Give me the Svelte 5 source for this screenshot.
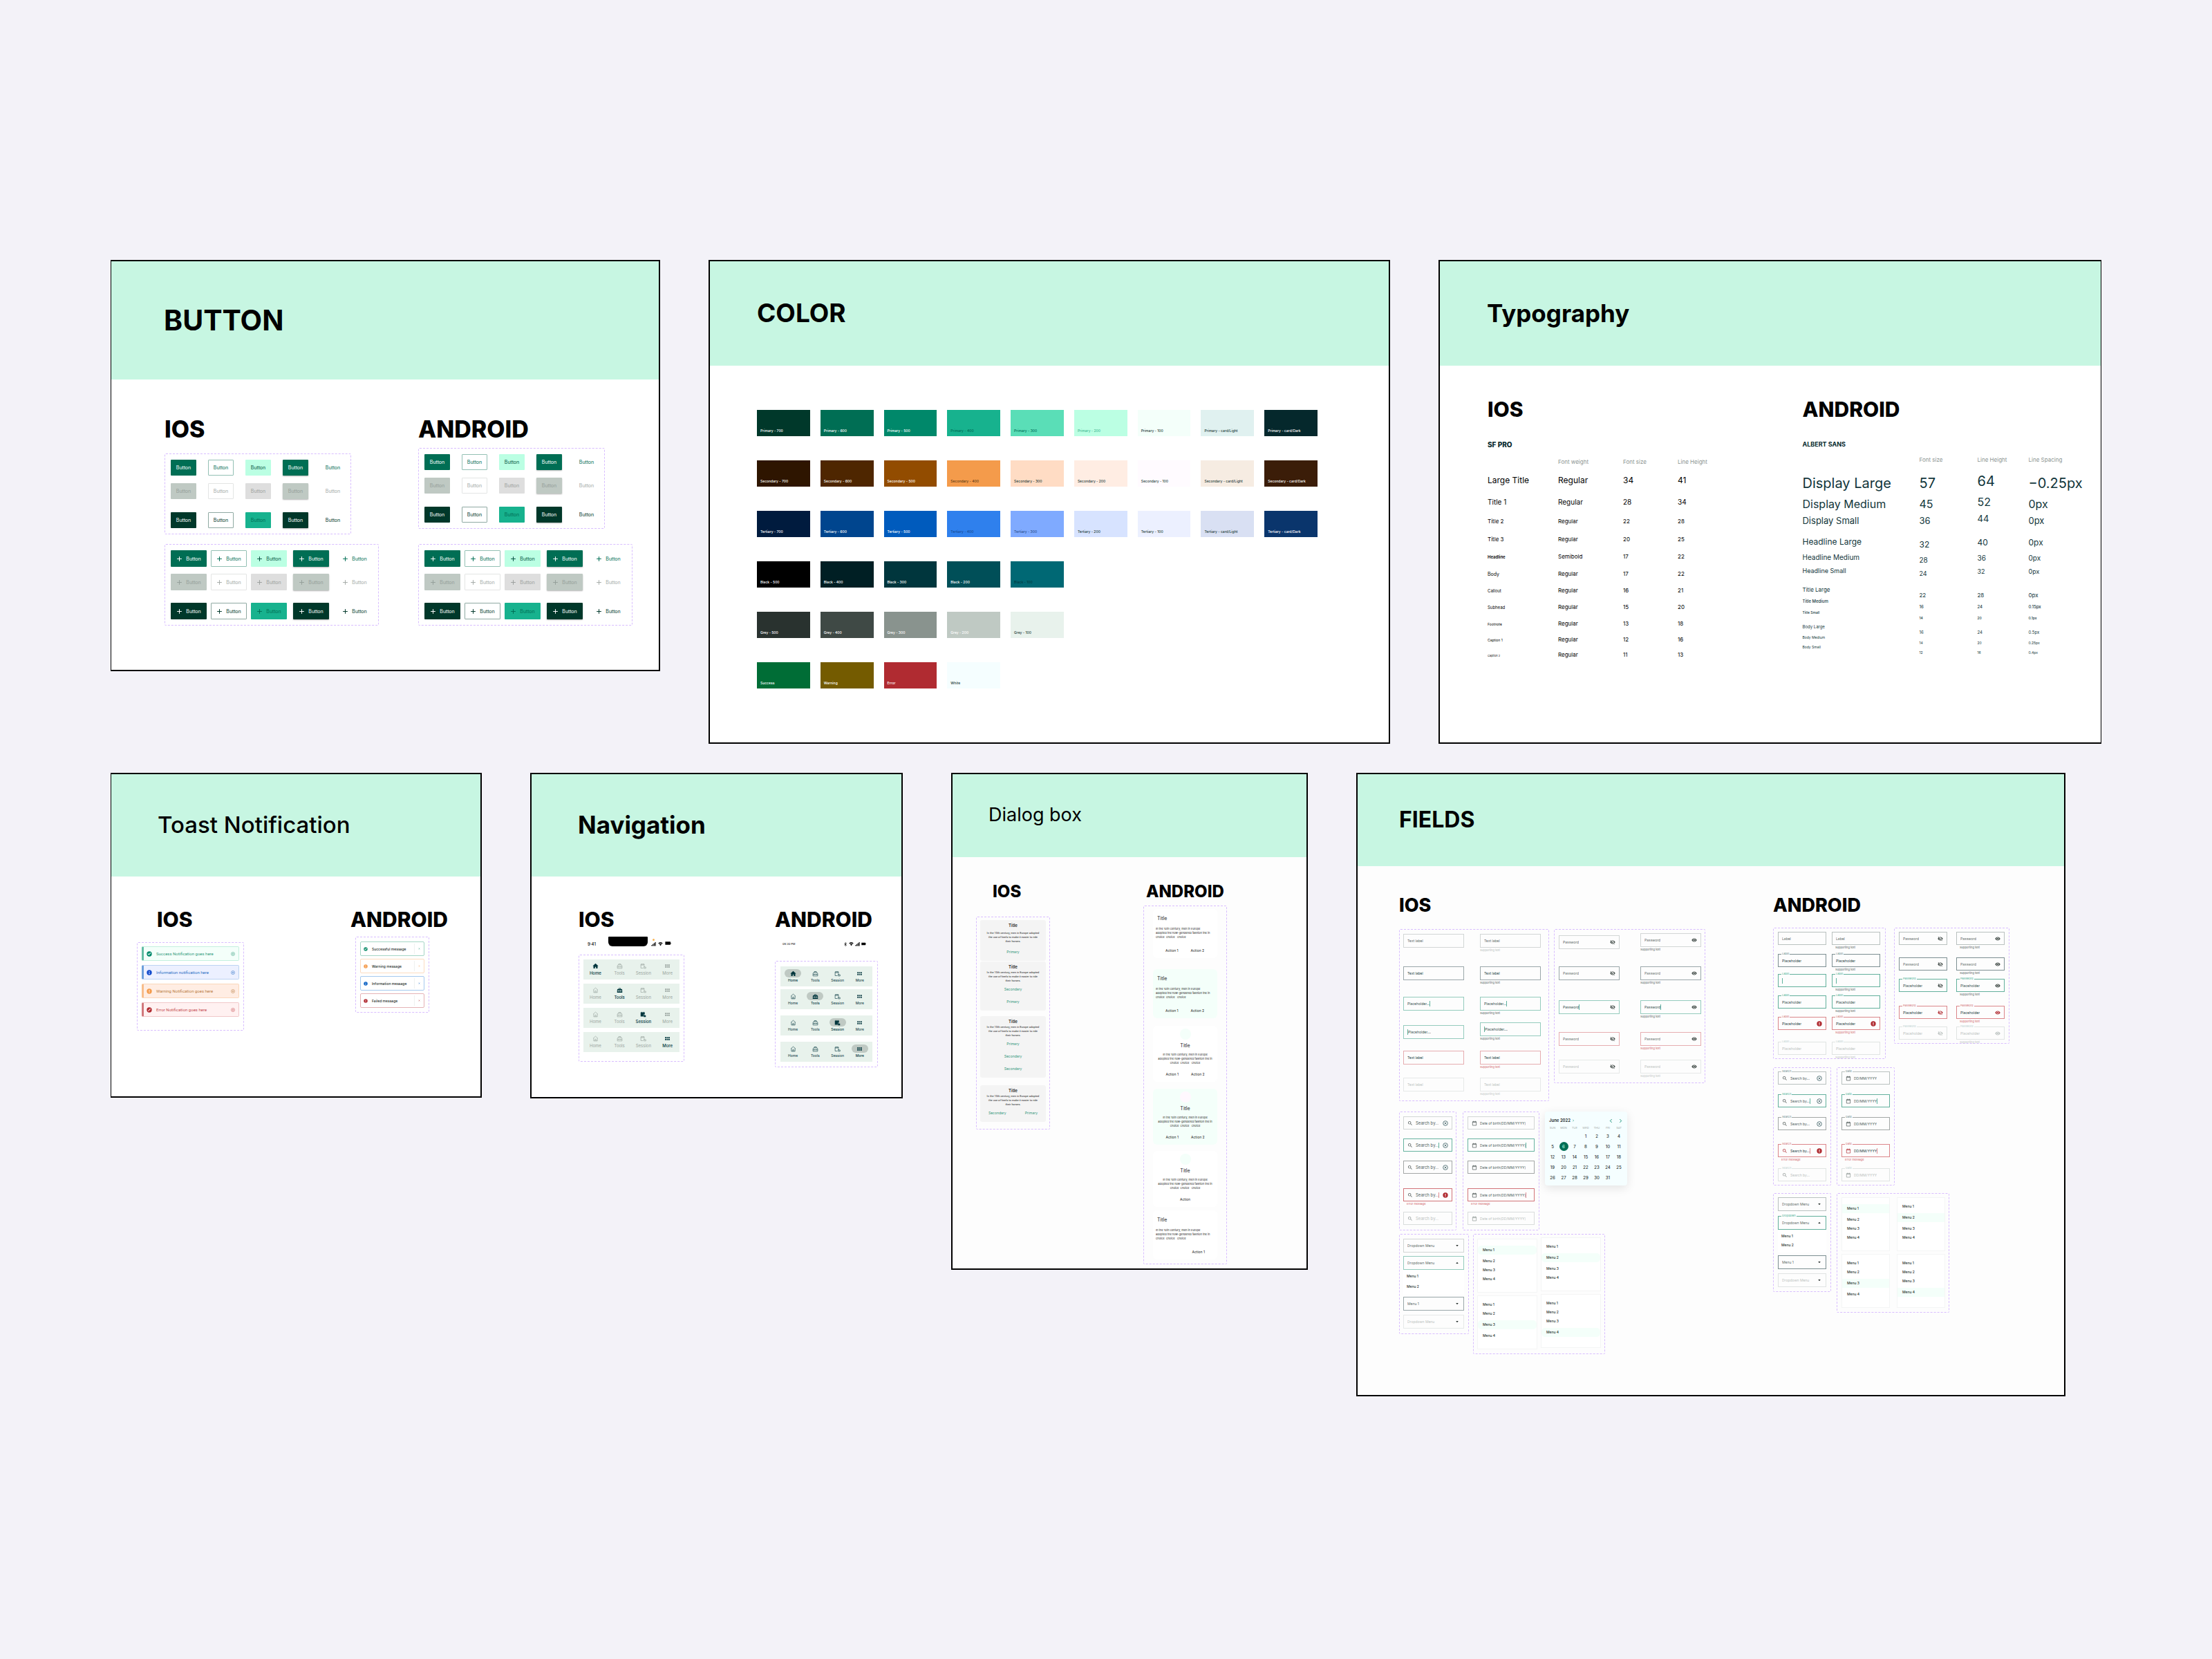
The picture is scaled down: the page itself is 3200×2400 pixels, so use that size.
<script>
  const icons = {
    plus: { d: 'M12 3v18M3 12h18', stroke: 2.6 },
    home: { d: 'M10 21v-6h4v6h6v-9h3L12 2 1 12h3v9z' },
    homeLine: { d: 'M3 11 12 3l9 8M5 10v11h14V10M10 21v-5a2 2 0 0 1 4 0v5', stroke: 1.8 },
    tools: { d: 'M8 7V4h8v3h4l2 4v3h-5v-2h-3v2h-4v-2H7v2H2v-3l2-4zM10 5.600V7h4V5.600zM2 15.500h5v2h3v-2h4v2h3v-2h5V21H2z' },
    toolsLine: { d: 'M8 8V4h8v4M5 8h14l2 4v9H3v-9zM3 15h18M8 13v4M16 13v4', stroke: 1.8 },
    session: { d: 'M2 4h3V2h2v2h6V2h2v2h3v7h-5v9H2zM14 12h3v3h5v7h-8z' },
    sessionLine: { d: 'M12 20H3V5h13v5M3 8h13M7 3v3M13 3v3M15 13h2v3h5v5h-7z', stroke: 1.8 },
    more: { d: 'M3 6h5v5H3zM9.500 6h5v5h-5zM16 6h5v5h-5zM3 13h5v5H3zM9.500 13h5v5h-5zM16 13h5v5h-5z' },
    eye: { d: 'M12 4.500C7 4.500 2.730 7.610 1 12c1.730 4.390 6 7.500 11 7.500s9.270-3.110 11-7.500c-1.730-4.390-6-7.500-11-7.500zM12 17c-2.760 0-5-2.240-5-5s2.240-5 5-5 5 2.240 5 5-2.240 5-5 5zm0-8c-1.660 0-3 1.340-3 3s1.340 3 3 3 3-1.340 3-3-1.340-3-3-3z' },
    eyeOff: { d: 'M12 7c2.760 0 5 2.240 5 5 0 .65-.13 1.260-.36 1.830l2.920 2.920c1.510-1.260 2.700-2.890 3.430-4.750-1.730-4.390-6-7.500-11-7.500-1.400 0-2.740.25-3.980.7l2.160 2.160C10.740 7.130 11.350 7 12 7zM2 4.270l2.280 2.280.46.46C3.080 8.300 1.780 10.020 1 12c1.730 4.390 6 7.500 11 7.500 1.550 0 3.030-.3 4.380-.84l.42.42L19.730 22 21 20.730 3.270 3 2 4.270zM7.530 9.800l1.550 1.550c-.05.21-.08.43-.08.65 0 1.660 1.340 3 3 3 .22 0 .44-.03.65-.08l1.550 1.550c-.67.33-1.410.53-2.200.53-2.760 0-5-2.240-5-5 0-.79.2-1.530.53-2.200z' },
    search: { d: 'M15.500 14h-.79l-.28-.27C15.410 12.590 16 11.110 16 9.500 16 5.910 13.090 3 9.500 3S3 5.910 3 9.500 5.910 16 9.500 16c1.610 0 3.090-.59 4.230-1.570l.27.28v.79l5 4.990L20.490 19l-4.990-5zm-6 0C7.010 14 5 11.990 5 9.500S7.010 5 9.500 5 14 7.010 14 9.500 11.990 14 9.500 14z' },
    clear: { d: 'M12 2a10 10 0 1 0 0 20 10 10 0 0 0 0-20zM8 8l8 8M16 8l-8 8', stroke: 2.2 },
    date: { d: 'M4 5h16v16H4zM4 8h16M8 2v4M16 2v4', stroke: 2 },
    alert: { d: 'M12 1a11 11 0 1 0 0 22 11 11 0 0 0 0-22zm-1.500 5h3v8h-3zm0 10h3v3h-3z' },
    check: { d: 'M12 1a11 11 0 1 0 0 22 11 11 0 0 0 0-22zm-2 16-5-5 2-2 3 3 7-7 2 2z' },
    info: { d: 'M12 1a11 11 0 1 0 0 22 11 11 0 0 0 0-22zm-1.500 5h3v3h-3zm0 5h3v8h-3z' },
    ban: { d: 'M12 1a11 11 0 1 0 0 22 11 11 0 0 0 0-22zM6 16l10-10 2 2L8 18z' },
    cross: { d: 'M5 5l14 14M19 5 5 19', stroke: 3.4 },
    down: { d: 'M5 8h14l-7 9z' },
    up: { d: 'M5 16h14l-7-9z' },
    next: { d: 'M8 4l8 8-8 8', stroke: 3.2 },
    prev: { d: 'M16 4l-8 8 8 8', stroke: 3.2 },
    signal: { d: 'M1 17h4v5H1zM7 13h4v9H7zM13 8h4v14h-4zM19 3h4v19h-4z' },
    wifi: { d: 'M1 9C7 3 17 3 23 9l-3 3c-4-4-12-4-16 0zM6 14c3-3 9-3 12 0l-6 7z' },
    battery: { d: 'M1 6h20v12H1zM22 10h2v4h-2z' },
    bluetooth: { d: 'M6 7l12 10-6 5V2l6 5L6 17', stroke: 2.6 }
  };

  const buttonKinds = ['filled', 'outlined', 'tonal', 'elevated', 'text'];
  const buttonStates = ['enabled', 'disabled', 'pressed'];

  const scale = (name, colors, dark) => [
    ...[700, 600, 500, 400, 300, 200, 100].map((step, i) => ({ label: `${name} - ${step}`, bg: colors[i], fg: dark[i] })),
    { label: `${name} - card/Light`, bg: colors[7], fg: '#1d3b38' },
    { label: `${name} - card/Dark`, bg: colors[8], fg: '#ffffff' }
  ];
  const W = '#ffffff';
  const D = '#1d3b38';
  const palette = [
    scale('Primary', ['#00382a', '#006e54', '#00886a', '#17b28e', '#5adeb7', '#bbffe3', '#f4fffa', '#e0f1f0', '#05282c'], [W, W, W, '#006a52', '#007057', '#45b893', D]),
    scale('Secondary', ['#2e1500', '#4e2600', '#924c00', '#f49b4b', '#ffdcc4', '#ffede3', '#fffbff', '#f6ece2', '#3b1d08'], [W, W, W, '#5c3a14', D, D, D]),
    scale('Tertiary', ['#001b3e', '#00458e', '#005bbd', '#2f80ed', '#7faaff', '#d7e3ff', '#ecf0ff', '#d9e0f3', '#0a356c'], [W, W, W, '#174a94', '#2b4f8d', D, D]),
    [['Black - 500', '#000000', W], ['Black - 400', '#001f24', W], ['Black - 300', '#00363d', W], ['Black - 200', '#004f58', W], ['Black - 100', '#006874', '#003a41']],
    [['Grey - 500', '#29322f', W], ['Grey - 400', '#3f4945', W], ['Grey - 300', '#89938e', W], ['Grey - 200', '#bfc9c3', W], ['Grey - 100', '#e8f2ec', D]],
    [['Success', '#006d36', W], ['Warning', '#745b00', W], ['Error', '#b02b31', W], ['White', '#f5feff', D]]
  ].map((row) => row.map((s) => (Array.isArray(s) ? { label: s[0], bg: s[1], fg: s[2] } : s)));

  // name, weight, size, line height, row height, label size, value size
  const iosType = [
    ['Large Title', 'Regular', 34, 41, 31, 12, 12],
    ['Title 1', 'Regular', 28, 34, 28, 10, 10],
    ['Title 2', 'Regular', 22, 28, 26, 8, 8],
    ['Title 3', 'Regular', 20, 25, 25, 8, 8],
    ['Headline', 'Semibold', 17, 22, 25, 6, 8],
    ['Body', 'Regular', 17, 22, 24, 7, 8],
    ['Callout', 'Regular', 16, 21, 24, 6, 8],
    ['Subhead', 'Regular', 15, 20, 24, 6, 8],
    ['Footnote', 'Regular', 13, 18, 23, 5, 8],
    ['Caption 1', 'Regular', 12, 16, 22, 5, 8],
    ['Caption 2', 'Regular', 11, 13, 16, 4, 8]
  ];
  // name, size, line height, spacing, row height, text size, group
  const androidType = [
    ['Display Large', 57, 64, '−0.25px', 30, 20, 'display'],
    ['Display Medium', 45, 52, '0px', 24, 16, 'display'],
    ['Display Small', 36, 44, '0px', 34, 13, 'display'],
    ['Headline Large', 32, 40, '0px', 22, 12, 'headline'],
    ['Headline Medium', 28, 36, '0px', 20, 10, 'headline'],
    ['Headline Small', 24, 32, '0px', 27, 9, 'headline'],
    ['Title Large', 22, 28, '0px', 17, 8, 'small'],
    ['Title Medium', 16, 24, '0.15px', 16, 6, 'small medium'],
    ['Title Small', 14, 20, '0.1px', 21, 5, 'small medium'],
    ['Body Large', 16, 24, '0.5px', 15, 6, 'small'],
    ['Body Medium', 14, 20, '0.25px', 14, 5, 'small'],
    ['Body Small', 12, 16, '0.4px', 14, 5, 'small']
  ];

  const iosToasts = [
    ['success', 'check', 'Success Notification goes here'],
    ['info', 'info', 'Information notification here'],
    ['warning', 'alert', 'Warning Notification goes here'],
    ['error', 'ban', 'Error Notification goes here']
  ];
  const androidToasts = [
    ['success', 'check', 'Successful message'],
    ['warning', 'alert', 'Warning message'],
    ['info', 'info', 'Information message'],
    ['error', 'alert', 'Failed message']
  ];

  const tabs = [['home', 'Home'], ['tools', 'Tools'], ['session', 'Session'], ['more', 'More']];

  const iosDialogText = ['In the 10th century, men in Europe adopted', 'the use of heels to make it easier to ride', 'their horses.'];
  const androidDialogText = ['In the 10th century, men in Europe', 'adopted the now-gendered fashion the in', 'choice  choice   choice'];
  const iosDialogs = [
    { actions: ['Primary'], roomy: true },
    { actions: ['Secondary', 'Primary'] },
    { actions: ['Primary', 'Secondary', 'Secondary'] },
    { actions: ['Secondary', 'Primary'], row: true }
  ];
  const androidDialogs = [
    { actions: ['Action 1', 'Action 2'] },
    { actions: ['Action 1', 'Action 2'], tint: true },
    { actions: ['Action 1', 'Action 2'], hero: true },
    { actions: ['Action 1', 'Action 2'], hero: true, tint: true },
    { actions: ['Action'], hero: true },
    { actions: ['Action 1'], end: true }
  ];

  const iosText = [
    { value: 'Text label', state: 'idle' },
    { value: 'Text label', state: 'strong' },
    { value: 'Placeholder...', state: 'focus', caret: 'end' },
    { value: 'Placeholder....', state: 'focus', caret: 'start' },
    { value: 'Text label', state: 'error' },
    { value: 'Text label', state: 'off' }
  ];
  const iosPassword = ['idle', 'strong', 'focus', 'error', 'off'].map((state) => ({
    value: 'Password', state, caret: state === 'focus' ? 'end' : ''
  }));
  const androidText = [
    { value: 'Label', state: 'idle' },
    { value: 'Placeholder', state: 'strong', label: 'Label' },
    { value: '', state: 'focus', label: 'Label', caret: 'start' },
    { value: 'Placeholder', state: 'focus', label: 'Label' },
    { value: 'Placeholder', state: 'error', label: 'Label', trail: 'alert' },
    { value: 'Placeholder', state: 'off', label: 'Label' }
  ];
  const androidPassword = [
    { value: 'Password', state: 'idle' },
    { value: 'Password', state: 'strong' },
    { value: 'Placeholder', state: 'focus', label: 'Password' },
    { value: 'Placeholder', state: 'error', label: 'Password' },
    { value: 'Placeholder', state: 'off', label: 'Password' }
  ];
  const pickerStates = ['idle', 'focus', 'dark', 'error', 'off'];
  const pickers = (value, lead, trail, label) =>
    pickerStates.map((state) => ({
      value, state, lead, label,
      trail: !trail || state === 'off' ? '' : state === 'error' ? 'alert' : trail,
      caret: state === 'focus' || state === 'error' ? 'end' : '',
      support: state === 'error' ? 'Error message' : ''
    }));

  const weekdays = ['SUN', 'MON', 'TUE', 'WED', 'THU', 'FRI', 'SAT'];
  const weeks = Array.from({ length: 5 }, (_, w) =>
    Array.from({ length: 7 }, (_, d) => w * 7 + d - 2).map((n) => (n > 0 && n < 32 ? n : null))
  );
  const menu = ['Menu 1', 'Menu 2', 'Menu 3', 'Menu 4'];
</script>

{#snippet icon(name, cls = '')}
  <svg class="icon {cls}" viewBox="0 0 24 24" aria-hidden="true">
    {#if icons[name].stroke}
      <path d={icons[name].d} fill="none" stroke="currentColor" stroke-width={icons[name].stroke} />
    {:else}
      <path d={icons[name].d} fill="currentColor" fill-rule="evenodd" />
    {/if}
  </svg>
{/snippet}

{#snippet buttonSet(withIcon)}
  <div class="set buttons" class:wide={withIcon}>
    {#each buttonStates as state}
      {#each buttonKinds as kind}
        <button class="btn {kind} {state}" disabled={state === 'disabled'}>
          {#if withIcon}{@render icon('plus', 'i9')}{/if}
          <span>Button</span>
        </button>
      {/each}
    {/each}
  </div>
{/snippet}

{#snippet tabBars(kind)}
  <div class="set bars {kind}">
    {#each tabs as current}
      <nav class="bar">
        {#each tabs as tab}
          <button class="tab" class:active={tab === current}>
            <span class="tab-icon">
              {@render icon(tab === current || tab[0] === 'more' ? tab[0] : tab[0] + 'Line', 'i9')}
            </span>
            <span>{tab[1]}</span>
          </button>
        {/each}
      </nav>
    {/each}
  </div>
{/snippet}

{#snippet field(f, extra = {})}
  {@const o = { ...f, ...extra }}
  <div class="cell">
    <label class="field {o.state}">
      {#if o.label}<span class="floating">{o.label}</span>{/if}
      {#if o.lead}{@render icon(o.lead, 'lead')}{/if}
      {#if o.caret === 'start'}<i class="caret"></i>{/if}
      <input type="text" value={o.value} size="1" disabled={o.state === 'off'} aria-label={o.label || o.value} />
      {#if o.caret === 'end'}<i class="caret"></i>{/if}
      {#if o.trail}{@render icon(o.trail, 'trail ' + o.trail)}{/if}
    </label>
    {#if o.support}<small class={o.state}>{o.support}</small>{/if}
  </div>
{/snippet}

{#snippet dropdown(value, state, arrow, label)}
  <label class="field {state}">
    {#if label}<span class="floating">{label}</span>{/if}
    <select disabled={state === 'off'} aria-label={label || value}><option>{value}</option></select>
    {@render icon(arrow, 'i6 arrow')}
  </label>
{/snippet}

{#snippet dropdowns(label)}
  <div class="set drops">
    {@render dropdown('Dropdown Menu', 'idle', 'down')}
    <div>
      {@render dropdown('Dropdown Menu', 'focus', 'up', label)}
      <ul class="options"><li>Menu 1</li><li>Menu 2</li></ul>
    </div>
    {@render dropdown('Menu 1', 'strong', 'down')}
    {@render dropdown('Dropdown Menu', 'off', 'down')}
  </div>
{/snippet}

{#snippet menuCard(active)}
  <ul class="menu">
    {#each menu as item, i}<li class:active={i === active}>{item}</li>{/each}
  </ul>
{/snippet}

{#snippet menus()}
  <div class="set menus">
    <div class="menu-col">{@render menuCard(0)}{@render menuCard(2)}</div>
    <div class="menu-col">{@render menuCard(1)}{@render menuCard(3)}</div>
  </div>
{/snippet}

<main>
  <div class="row top-row">
    <section class="panel p-button">
      <header><h2>BUTTON</h2></header>
      <div class="body">
        <div class="platform ios">
          <h3>IOS</h3>
          {@render buttonSet(false)}
          {@render buttonSet(true)}
        </div>
        <div class="platform android">
          <h3>ANDROID</h3>
          {@render buttonSet(false)}
          {@render buttonSet(true)}
        </div>
      </div>
    </section>

    <section class="panel p-color">
      <header><h2>COLOR</h2></header>
      <div class="body palette">
        {#each palette as row}
          <ul class="swatches">
            {#each row as s}
              <li style:background={s.bg} style:color={s.fg}>{s.label}</li>
            {/each}
          </ul>
        {/each}
      </div>
    </section>

    <section class="panel p-type">
      <header><h2>Typography</h2></header>
      <div class="body">
        <div class="platform ios">
          <h3>IOS</h3>
          <h4>SF PRO</h4>
          <table>
            <thead><tr><th></th><th>Font weight</th><th>Font size</th><th>Line Height</th></tr></thead>
            <tbody>
              {#each iosType as [name, weight, size, line, height, labelSize, valueSize]}
                <tr style:height="{height}px" style:font-size="{valueSize}px">
                  <td class:strong={weight === 'Semibold'} style:font-size="{labelSize}px">{name}</td>
                  <td>{weight}</td><td>{size}</td><td>{line}</td>
                </tr>
              {/each}
            </tbody>
          </table>
        </div>
        <div class="platform android">
          <h3>ANDROID</h3>
          <h4>ALBERT SANS</h4>
          <table>
            <thead><tr><th></th><th>Font size</th><th>Line Height</th><th>Line Spacing</th></tr></thead>
            <tbody>
              {#each androidType as [name, size, line, spacing, height, textSize, group]}
                <tr class={group} style:height="{height}px" style:font-size="{textSize}px">
                  <td>{name}</td><td>{size}</td><td>{line}</td><td>{spacing}</td>
                </tr>
              {/each}
            </tbody>
          </table>
        </div>
      </div>
    </section>
  </div>

  <div class="row bottom-row">
    <section class="panel p-toast">
      <header><h2>Toast Notification</h2></header>
      <div class="body">
        <div class="platform ios">
          <h3>IOS</h3>
          <div class="set toasts">
            {#each iosToasts as [tone, mark, text]}
              <div class="toast {tone}" role="status">
                {@render icon(mark, 'i8')}
                <span>{text}</span>
                <button aria-label="Dismiss">{@render icon('clear', 'i6')}</button>
              </div>
            {/each}
          </div>
        </div>
        <div class="platform android">
          <h3>ANDROID</h3>
          <div class="set toasts">
            {#each androidToasts as [tone, mark, text]}
              <div class="toast {tone}" role="status">
                {@render icon(mark, 'i6')}
                <span>{text}</span>
                <button aria-label="Dismiss">{@render icon('cross', 'i3')}</button>
              </div>
            {/each}
          </div>
        </div>
      </div>
    </section>

    <section class="panel p-nav">
      <header><h2>Navigation</h2></header>
      <div class="body">
        <div class="platform ios">
          <h3>IOS</h3>
          <div class="status">
            <time>9:41</time>
            <div class="notch"></div>
            <div class="status-icons">
              <i class="dot"></i>
              {@render icon('signal', 'i7')}{@render icon('wifi', 'i7')}{@render icon('battery', 'i9')}
            </div>
          </div>
          {@render tabBars('ios-bars')}
        </div>
        <div class="platform android">
          <h3>ANDROID</h3>
          <div class="status">
            <time>09:30 PM</time>
            <div class="status-icons">
              {@render icon('bluetooth', 'i6')}{@render icon('wifi', 'i7')}{@render icon('signal', 'i7')}{@render icon('battery', 'i7')}
            </div>
          </div>
          {@render tabBars('android-bars')}
        </div>
      </div>
    </section>

    <section class="panel p-dialog">
      <header><h2>Dialog box</h2></header>
      <div class="body">
        <div class="platform ios">
          <h3>IOS</h3>
          <div class="set dialogs">
            {#each iosDialogs as d}
              <article class="dialog" class:roomy={d.roomy}>
                <h5>Title</h5>
                <p>{#each iosDialogText as line}<span>{line}</span>{/each}</p>
                <div class="actions" class:side={d.row}>
                  {#each d.actions as a}<button>{a}</button>{/each}
                </div>
              </article>
            {/each}
          </div>
        </div>
        <div class="platform android">
          <h3>ANDROID</h3>
          <div class="set dialogs">
            {#each androidDialogs as d}
              <article class="dialog" class:tint={d.tint} class:hero={d.hero} class:end={d.end}>
                {#if d.hero}<i class="disc"></i>{/if}
                <h5>Title</h5>
                <p>{#each androidDialogText as line}<span>{line}</span>{/each}</p>
                <div class="actions">{#each d.actions as a}<button>{a}</button>{/each}</div>
              </article>
            {/each}
          </div>
        </div>
      </div>
    </section>

    <section class="panel p-fields">
      <header><h2>FIELDS</h2></header>
      <div class="body">
        <div class="platform ios">
          <h3>IOS</h3>
          <div class="group">
            <div class="set text-set">
              <div class="col a">{#each iosText as f}{@render field(f)}{/each}</div>
              <div class="col b">{#each iosText as f}{@render field(f, { support: 'Supporting text' })}{/each}</div>
            </div>
            <div class="set pass-set">
              <div class="col a">{#each iosPassword as f}{@render field(f, { trail: 'eyeOff' })}{/each}</div>
              <div class="col b">{#each iosPassword as f}{@render field(f, { trail: 'eye', support: 'Supporting text' })}{/each}</div>
            </div>
          </div>
          <div class="group">
            <div class="set pick-set">
              {#each pickers('Search by...', 'search', 'clear') as f}{@render field(f)}{/each}
            </div>
            <div class="set pick-set date">
              {#each pickers('Date of birth(DD/MM/YYYY)', 'date', '') as f}{@render field(f)}{/each}
            </div>
            <div class="calendar">
              <div class="month">
                <strong>June 2022</strong>
                <button class="open" aria-label="Choose month">{@render icon('next', 'i4')}</button>
                <button aria-label="Previous month">{@render icon('prev', 'i7')}</button>
                <button aria-label="Next month">{@render icon('next', 'i7')}</button>
              </div>
              <table>
                <thead><tr>{#each weekdays as day}<th>{day}</th>{/each}</tr></thead>
                <tbody>
                  {#each weeks as week}
                    <tr>
                      {#each week as day}
                        <td>{#if day}<button class:selected={day === 6}>{day}</button>{/if}</td>
                      {/each}
                    </tr>
                  {/each}
                </tbody>
              </table>
            </div>
          </div>
          <div class="group">
            {@render dropdowns('')}
            {@render menus()}
          </div>
        </div>

        <div class="platform android">
          <h3>ANDROID</h3>
          <div class="group">
            <div class="set text-set">
              <div class="col">{#each androidText as f}{@render field(f)}{/each}</div>
              <div class="col">{#each androidText as f}{@render field(f, { support: 'Supporting text' })}{/each}</div>
            </div>
            <div class="set pass-set">
              <div class="col">{#each androidPassword as f}{@render field(f, { trail: 'eyeOff' })}{/each}</div>
              <div class="col">{#each androidPassword as f}{@render field(f, { trail: 'eye', support: 'Supporting text' })}{/each}</div>
            </div>
          </div>
          <div class="group">
            <div class="set pick-set">
              {#each pickers('Search by...', 'search', 'clear', 'Search') as f}{@render field(f)}{/each}
            </div>
            <div class="set pick-set">
              {#each pickers('DD/MM/YYYY', 'date', '', 'Date') as f}{@render field(f)}{/each}
            </div>
          </div>
          <div class="group">
            {@render dropdowns('Dropdown')}
            {@render menus()}
          </div>
        </div>
      </div>
    </section>
  </div>
</main>

<style>
  :global(body) {
    background: #f3f2f8;
  }
  main,
  main * {
    box-sizing: border-box;
  }
  main {
    min-height: 100vh;
    padding: 376px 160px;
    display: flex;
    flex-direction: column;
    gap: 42px;
    font-family: Inter, 'Liberation Sans', sans-serif;
    color: #000;
  }
  h2, h3, h4, h5, p, ul {
    margin: 0;
    padding: 0;
  }
  ul {
    list-style: none;
  }
  button, input, select {
    margin: 0;
    padding: 0;
    border: 0;
    background: none;
    font: inherit;
    color: inherit;
  }
  button {
    line-height: inherit;
    white-space: nowrap;
  }
  .icon {
    display: block;
    flex: none;
    width: 8px;
    height: 8px;
  }
  .i3 { width: 3px; height: 3px; }
  .i4 { width: 4px; height: 4px; }
  .i6 { width: 6px; height: 6px; }
  .i7 { width: 7px; height: 7px; }
  .i9 { width: 9px; height: 9px; }

  .row {
    display: grid;
    align-items: start;
    gap: 70px;
  }
  .top-row {
    grid-template-columns: minmax(0, 795fr) minmax(0, 986fr) minmax(0, 959fr);
  }
  .bottom-row {
    grid-template-columns: minmax(0, 537fr) minmax(0, 539fr) minmax(0, 516fr) minmax(0, 1026fr);
    padding-right: 52px;
  }
  .panel {
    border: 2px solid #000;
    background: #fff;
  }
  .p-button, .p-toast { border-left-width: 1px; }
  .p-type { border-right-width: 1px; }
  .p-dialog, .p-fields { background: #fdfdfd; }

  header {
    display: flex;
    align-items: center;
    height: 151px;
    padding: 0 0 2px 68px;
    background: #c7f6e2;
  }
  h2 {
    font-size: 36px;
    line-height: 44px;
    font-weight: 700;
    white-space: nowrap;
  }
  .p-button header { height: 171px; padding-left: 76px; }
  .p-button h2 { font-size: 41px; }
  .p-color h2 { font-size: 37px; }
  .p-type h2 { font-size: 35px; }
  .p-toast header, .p-nav header { height: 148px; padding-left: 67px; }
  .p-toast h2 { font-size: 33px; font-weight: 500; }
  .p-nav h2 { font-size: 35px; }
  .p-dialog header { height: 120px; padding-left: 52px; }
  .p-dialog h2 { font-size: 27px; font-weight: 400; }
  .p-fields header { height: 133px; padding-left: 60px; }
  .p-fields h2 { font-size: 32px; }

  .body {
    display: grid;
    align-items: start;
  }
  h3 {
    font-size: 30px;
    line-height: 29px;
    font-weight: 800;
    white-space: nowrap;
  }
  .set {
    width: max-content;
    border: 1px dashed #d8bdff;
    border-radius: 2px;
  }

  /* Buttons */
  .p-button .body {
    grid-template-columns: 367fr 348fr;
    padding: 55px 0 64px 77px;
  }
  .p-button h3 { font-size: 34px; line-height: 34px; }
  .p-button .ios h3 { margin-bottom: 18px; }
  .p-button .android h3 { margin-bottom: 10px; }
  .buttons {
    display: grid;
    grid-template-columns: repeat(5, 37px);
    grid-template-rows: 34px 42px 23px;
    column-gap: 17px;
    padding: 8px 7px 8px 8px;
    align-items: start;
    font-size: 7px;
    line-height: 9px;
  }
  .buttons.wide {
    grid-template-columns: 58px 58px 61px 63px 52px;
    grid-template-rows: 34px 42px 24px;
    column-gap: 0;
    padding: 8px;
    margin-top: 14px;
  }
  .android .buttons.wide { margin-top: 22px; }
  .btn {
    display: flex;
    align-items: center;
    justify-content: center;
    gap: 5px;
    width: 37px;
    height: 23px;
    border-radius: 1px;
    color: #fff;
    background: #006e54;
  }
  .wide .btn { width: 52px; height: 24px; }
  .btn.elevated { box-shadow: 0 1px 2px rgba(0, 0, 0, 0.3); }
  .btn.outlined { background: none; color: #006e54; border: 1px solid #93c0b4; }
  .btn.tonal { background: #bbffe3; color: #00513d; }
  .btn.text { background: none; color: #006e54; }
  .btn.disabled { background: #bfc9c3; color: #949e99; }
  .btn.disabled.outlined { background: none; border-color: #e3e5e4; color: #a3aaa7; }
  .btn.disabled.tonal { background: #dedede; color: #9b9f9d; }
  .btn.disabled.text { background: none; color: #a3aaa7; }
  .btn.pressed { background: #00382a; }
  .btn.pressed.outlined { background: none; border-color: #8fa9a2; color: #00382a; }
  .btn.pressed.tonal { background: #17b28e; color: #006e54; }
  .btn.pressed.text { background: none; color: #00382a; }

  /* Colours */
  .palette {
    gap: 35px;
    padding: 64px 103px 78px 68px;
  }
  .swatches {
    display: grid;
    grid-template-columns: repeat(9, minmax(0, 1fr));
    gap: 15px;
  }
  .swatches li {
    display: flex;
    align-items: flex-end;
    height: 38px;
    padding: 0 0 4px 5px;
    font-size: 5px;
    line-height: 7px;
    font-weight: 500;
    white-space: nowrap;
  }

  /* Typography */
  .p-type .body {
    grid-template-columns: 456fr 432fr;
    padding: 49px 0 117px 69px;
    white-space: nowrap;
  }
  h4 {
    margin-top: 31px;
    font-size: 9px;
    line-height: 10px;
    font-weight: 700;
    color: #06282d;
  }
  .ios h4 { font-size: 10px; font-weight: 800; }
  .p-type table {
    table-layout: fixed;
    border-collapse: collapse;
    width: 325px;
    margin-top: 12px;
  }
  .p-type .android table { width: 407px; margin-top: 14px; color: #12363b; }
  .p-type th, .p-type td {
    padding: 0;
    text-align: left;
    vertical-align: baseline;
    font-weight: 400;
    line-height: 16px;
  }
  .p-type thead tr { height: 27px; font-size: 8px; color: #8b9491; }
  .p-type .ios th:nth-child(1) { width: 102px; }
  .p-type .ios th:nth-child(2) { width: 94px; }
  .p-type .ios th:nth-child(3) { width: 79px; }
  .p-type .android th:nth-child(1) { width: 169px; }
  .p-type .android th:nth-child(2) { width: 84px; }
  .p-type .android th:nth-child(3) { width: 74px; }
  .p-type td.strong { font-weight: 600; }
  .p-type .android thead tr { height: 31px; }
  .p-type .android th, .p-type .android td { vertical-align: top; line-height: 6px; }
  .p-type .headline td:nth-child(2) { padding-top: 4px; }
  .p-type .headline td:nth-child(n + 3) { padding-top: 1px; }
  .p-type .display td { padding-top: 3px; }
  .p-type .display td:nth-child(3) { padding-top: 0; }
  .p-type .small td:nth-child(n + 2) { padding-top: 8px; }
  .p-type .medium td { font-weight: 500; }

  /* Toasts */
  .p-toast .body {
    grid-template-columns: 309fr 188fr;
    padding: 48px 0 95px 37px;
  }
  .p-toast .ios h3 { margin: 0 0 18px 29px; }
  .p-toast .android h3 { margin: 0 0 10px; }
  .toasts {
    display: grid;
    gap: 6px;
    padding: 5px 6px 19px;
  }
  .toast {
    display: flex;
    align-items: center;
    width: 141px;
    height: 21px;
    border: 1px solid;
    border-radius: 2px;
    white-space: nowrap;
    font-size: 6px;
    line-height: 8px;
  }
  .toast button { margin-left: auto; }
  .ios .toast {
    border-left-width: 3px;
    padding: 0 5px 0 4px;
    gap: 6px;
    font-family: Roboto, sans-serif;
  }
  .ios .toast.success { background: #f4fffa; border-color: #c3f0df; border-left-color: #63bda4; color: #2f9a7b; }
  .ios .toast.info { background: #ecf0ff; border-color: #bcd3f3; border-left-color: #6c9fdb; color: #2a6fc4; }
  .ios .toast.warning { background: #ffede3; border-color: #fbd7bb; border-left-color: #f8bd8b; color: #b87a3e; }
  .ios .toast.error { background: #fff1f1; border-color: #f1c7c9; border-left-color: #d1787c; color: #c5494f; }
  .ios .toast.success > :global(.icon) { color: #00886a; }
  .ios .toast.info > :global(.icon) { color: #1049cc; }
  .ios .toast.warning > :global(.icon) { color: #f49b4b; }
  .ios .toast.error > :global(.icon) { color: #b02b31; }
  .android .toasts { gap: 4px; margin-left: 7px; padding: 6px; }
  .android .toast {
    width: 93px;
    gap: 6px;
    padding-left: 4px;
    font-size: 5px;
    font-weight: 500;
    color: #232b29;
  }
  .android .toast button {
    display: flex;
    align-items: center;
    justify-content: center;
    width: 14px;
    height: 15px;
    border-left: 1px solid #eef1f0;
  }
  .android .toast.success { border-color: #a5d6c6; }
  .android .toast.warning { border-color: #fcdcc0; }
  .android .toast.info { border-color: #a5c9ee; }
  .android .toast.error { border-color: #e5b3b6; }
  .android .success :global(.icon) { color: #17906f; }
  .android .warning :global(.icon) { color: #f49b4b; }
  .android .info :global(.icon) { color: #0d62c4; }
  .android .error :global(.icon) { color: #b02b31; }

  /* Navigation */
  .p-nav .body {
    grid-template-columns: 284fr 183fr;
    padding: 48px 0 43px 68px;
  }
  .status {
    display: grid;
    grid-template-columns: 43px 57px 53px;
    height: 13px;
    margin: 10px 0 13px;
  }
  .status time {
    align-self: center;
    padding: 7px 0 0 13px;
    font-size: 6px;
    line-height: 7px;
    font-weight: 500;
    white-space: nowrap;
  }
  .notch {
    background: #000;
    border-radius: 1px 1px 6px 6px;
  }
  .status-icons {
    position: relative;
    display: flex;
    align-items: flex-end;
    gap: 3px;
    padding-left: 5px;
    height: 14px;
  }
  .dot {
    position: absolute;
    left: 7px;
    top: 3px;
    width: 3px;
    height: 3px;
    border-radius: 50%;
    background: #f9b455;
  }
  .android .status {
    grid-template-columns: 99px 50px;
    margin: 10px 0 22px;
  }
  .android .status time { padding-left: 11px; font-size: 4px; font-weight: 400; }
  .android .status-icons { gap: 2px; padding-left: 0; }
  .bars {
    display: grid;
    grid-template-rows: 35px 35px 35px 29px;
    width: 153px;
    padding: 6px 6px 13px;
    align-items: start;
    font-size: 6px;
    line-height: 7px;
  }
  .bar {
    display: grid;
    grid-template-columns: repeat(4, 1fr);
    height: 29px;
    background: #e8f2ec;
    color: #9aa5a0;
  }
  .tab {
    display: flex;
    flex-direction: column;
    align-items: center;
    gap: 1px;
    padding-top: 4px;
  }
  .tab-icon {
    display: flex;
    align-items: center;
    justify-content: center;
    width: 24px;
    height: 11px;
    border-radius: 6px;
  }
  .tab.active { color: #00363d; font-weight: 500; }
  .bars.android-bars {
    grid-template-rows: 33px 38px 38px 29px;
    width: 149px;
    padding: 7px;
    font-size: 5px;
  }
  .android-bars .bar { padding: 0 2px; color: #1d4a50; }
  .android-bars .tab-icon { height: 12px; }
  .android-bars .tab.active .tab-icon { background: #bfc9c3; }
  .android-bars .tab, .android-bars .tab.active { font-weight: 500; }

  /* Dialogs */
  .p-dialog .body {
    grid-template-columns: 242fr 236fr;
    padding: 38px 0 6px 34px;
  }
  .p-dialog h3 { font-size: 24px; line-height: 24px; }
  .p-dialog .ios h3 { margin: 0 0 24px 24px; }
  .p-dialog .android h3 { margin: 0 0 8px 4px; }
  .dialogs {
    display: grid;
    grid-template-rows: 60px 79px 100px 52px;
    align-items: start;
    padding: 4px 5px 11px;
  }
  .dialog {
    width: 95px;
    border-radius: 3px;
    background: #f4f4f4;
    padding: 5px 0 4px;
    text-align: center;
    font-size: 4px;
    line-height: 6px;
    color: #222;
  }
  .dialog p span { display: block; white-space: pre; }
  .dialog h5 { font-size: 6px; line-height: 6px; font-weight: 600; margin-bottom: 2px; color: #222; }
  .ios .dialog p { font-family: Roboto, sans-serif; }
  .dialog.roomy h5 { margin-bottom: 5px; }
  .dialog.roomy p { margin-bottom: 3px; }
  .actions { display: flex; font-size: 5px; }
  .ios .actions { flex-direction: column; align-items: center; line-height: 18px; color: #2f9579; }
  .ios .actions.side { flex-direction: row; justify-content: space-between; padding: 0 12px; }
  .android .dialogs {
    grid-template-rows: 87px 82px 91px 90px 86px 72px;
    padding: 4px 13px 5px;
  }
  .android .dialog {
    width: 93px;
    min-height: 71px;
    padding: 10px 4px 7px;
    border-radius: 6px;
    background: #fff;
    text-align: left;
  }
  .android .dialog.tint { background: #f4fffa; }
  .android .dialog h5 { font-size: 7px; line-height: 8px; font-weight: 400; margin: 0 2px 8px; }
  .android .actions { gap: 18px; margin-top: 12px; padding: 0 14px; line-height: 8px; color: #222; }
  .android .end .actions { justify-content: flex-end; }
  .android .dialog.hero { padding: 4px 0 7px; text-align: center; }
  .disc {
    display: block;
    width: 16px;
    height: 16px;
    margin: 0 auto 5px;
    border-radius: 50%;
    background: #f4fffa;
  }
  .tint .disc { background: #fff8fe; }
  .android .hero h5 { margin: 0 0 6px; }
  .android .hero .actions { justify-content: center; margin-top: 9px; padding: 0; }

  /* Fields */
  .p-fields .body {
    grid-template-columns: 541fr 421fr;
    padding: 43px 0 59px 60px;
  }
  .p-fields h3 { font-size: 27px; line-height: 27px; margin-bottom: 21px; }
  .p-fields .android h3 { margin-bottom: 19px; }
  .group { display: flex; align-items: flex-start; gap: 7px; }
  .group + .group { margin-top: 15px; gap: 9px; }
  .group + .group + .group { margin-top: 5px; gap: 6px; }
  .android .group { gap: 12px; }
  .android .group + .group { margin-top: 12px; gap: 8px; }
  .android .group + .group + .group { margin-top: 11px; gap: 8px; }

  .text-set, .pass-set { display: flex; }
  .col { display: grid; align-items: start; }
  .ios .text-set { gap: 23px; padding: 6px 11px 6px 5px; }
  .ios .text-set .a { grid-template-rows: 47px 44px 41px 37px 39px 27px; }
  .ios .text-set .b { grid-template-rows: 47px 44px 37px 41px 39px 27px; }
  .ios .pass-set { gap: 30px; padding: 0 5px 13px 6px; align-items: flex-start; }
  .ios .pass-set .a { padding-top: 8px; grid-template-rows: 45px 49px 46px 40px 20px; }
  .ios .pass-set .b { padding-top: 5px; grid-template-rows: 48px 49px 46px 40px 20px; }
  .android .text-set { gap: 8px; padding: 5px 7px 5px 6px; }
  .android .text-set .col { grid-template-rows: 32px 29px 31px 31px 36px 19px; }
  .android .pass-set { gap: 13px; padding: 5px 6px; }
  .android .pass-set .col { grid-template-rows: 37px 31px 39px 30px 19px; }
  .pick-set {
    display: grid;
    align-items: start;
    grid-template-rows: 32px 32px 40px 34px 20px;
    padding: 6px 5px;
  }
  .pick-set.date { padding: 6px; }
  .android .pick-set { padding: 5px 6px; grid-template-rows: 33px 33px 39px 35px 19px; }

  .field {
    position: relative;
    display: flex;
    align-items: center;
    width: 88px;
    height: 20px;
    padding: 0 5px;
    border: 1px solid #d2d6d5;
    font-size: 5px;
    line-height: 8px;
    color: #5f6b69;
  }
  .ios .pick-set .field { width: 71px; height: 19px; font-size: 6px; }
  .ios .pick-set.date .field { width: 97px; font-size: 5px; }
  .android .field { width: 70px; height: 19px; border-color: #b9c1bf; }
  .field input {
    field-sizing: content;
    min-width: 0;
    height: 8px;
    outline: 0;
  }
  .field select {
    appearance: none;
    flex: 1;
    min-width: 0;
    height: 10px;
    opacity: 1;
  }
  .field .caret {
    flex: none;
    width: 1px;
    height: 8px;
    background: #5fb39d;
  }
  .field :global(.lead) { margin-right: 4px; color: #46504e; }
  .field :global(.trail) { margin-left: auto; color: #3f4945; }
  .field :global(.trail.alert) { color: #b02b31; }
  .field :global(.clear) { color: #2b5157; }
  .field :global(.arrow) { margin-right: 1px; color: #29322f; }
  .field.strong { border-color: #9aa7a9; color: #22403f; }
  .field.dark { border-color: #a3a7a6; color: #3c4a49; }
  .field.focus { border-color: #94cbbd; color: #33504d; }
  .field.error { border-color: #e6adb0; color: #22403f; }
  .field.error .caret { background: #e08a8e; }
  .field.off { border-color: #e6e9e8; color: #bcc3c1; }
  .field.off :global(.lead) { color: #8d9593; }
  .pass-set .field.strong, .pass-set .field.error { color: #69736f; }
  .pick-set .field { color: #4d5d5c; }
  .pick-set .field.focus { border-color: #67b3a0; }
  .pick-set .field.error { border-color: #d27378; }
  .pick-set .field.off { border-color: #d9dddc; color: #bcc3c1; }
  .drops .field.strong, .drops .field.focus { color: #5f6b69; }
  .android .field.strong { border-color: #7d8f92; }
  .android .field.focus { border-color: #62b09c; }
  .android .field.error { border-color: #db868a; color: #22403f; }
  .android .field.off { border-color: #e0e4e3; }
  .android .off :global(.trail) { color: #bcc3c1; }

  .floating {
    position: absolute;
    top: -4px;
    left: 4px;
    padding: 0 1px;
    font-size: 4px;
    line-height: 6px;
    background: #fdfdfd;
    color: #5f8587;
  }
  .focus .floating { color: #3fae92; }
  .error .floating { color: #cf6a6f; }
  .off .floating { color: #bcd0d0; }
  small {
    display: block;
    margin-top: 1px;
    font-size: 4px;
    line-height: 6px;
    color: #4c5655;
    white-space: nowrap;
  }
  small.error { color: #cf5a5f; }
  small.off { color: #bcc3c1; }
  .ios .text-set small.idle { color: #b4bbb9; }
  .android small, .pick-set small { padding-left: 5px; }

  .calendar {
    width: 119px;
    margin-left: -1px;
    padding: 7px 3px 4px;
    border-radius: 4px;
    background: #f5feff;
    box-shadow: 0 4px 14px rgba(0, 0, 0, 0.1);
    text-align: center;
  }
  .month {
    display: flex;
    align-items: center;
    gap: 2px;
    height: 12px;
    padding: 0 3px;
    font-size: 6px;
    line-height: 12px;
    color: #00886a;
  }
  .month strong { font-weight: 600; color: #1f2d2c; }
  .month .open { margin-right: auto; }
  .month button + button + button { margin-left: 5px; }
  .calendar table {
    table-layout: fixed;
    border-collapse: collapse;
    width: 112px;
    margin-top: 1px;
    font-size: 6px;
    line-height: 13px;
  }
  .calendar th { padding: 0; font-size: 4px; line-height: 8px; font-weight: 500; color: #b3bbba; }
  .calendar td { padding: 0; height: 15px; font-weight: 500; }
  .calendar td button { display: block; width: 13px; height: 13px; margin: 0 auto; border-radius: 50%; color: #2a3332; }
  .calendar td button.selected { background: #006e54; color: #bbffe3; }

  .drops {
    display: grid;
    align-items: start;
    grid-template-rows: 25px 59px 26px 20px;
    padding: 6px 6px 7px 5px;
  }
  .ios .drops .field { padding-right: 5px; }
  .android .drops { grid-template-rows: 27px 57px 26px 20px; padding: 5px 6px 6px; }
  .drops .field { height: 20px; }
  .options {
    padding: 2px 5px 4px;
    background: #fff;
    font-size: 5px;
    line-height: 15px;
    font-weight: 500;
    color: #29322f;
  }
  .android .options { padding-top: 3px; line-height: 13px; }
  .menus { display: flex; gap: 5px; padding: 6px 5px; font-size: 5px; line-height: 13px; font-weight: 500; color: #29322f; }
  .menu-col { display: grid; gap: 4px; align-content: start; }
  .ios .menu-col { width: 87px; }
  .ios .menu-col + .menu-col { padding-bottom: 2px; }
  .ios .menus { align-items: flex-end; padding: 4px 5px 6px; }
  .android .menus { gap: 10px; padding: 5px 5px 6px 6px; }
  .android .menu-col { width: 70px; }
  .menu {
    height: 78px;
    padding: 6px 0;
    border: 1px solid #f4f5f5;
    background: #fff;
  }
  .menu li { padding-left: 7px; }
  .menu li.active { margin: 3px 0; background: #f4fffa; border-radius: 5px; }
  .android .menu li.active { border-radius: 0; }
</style>
